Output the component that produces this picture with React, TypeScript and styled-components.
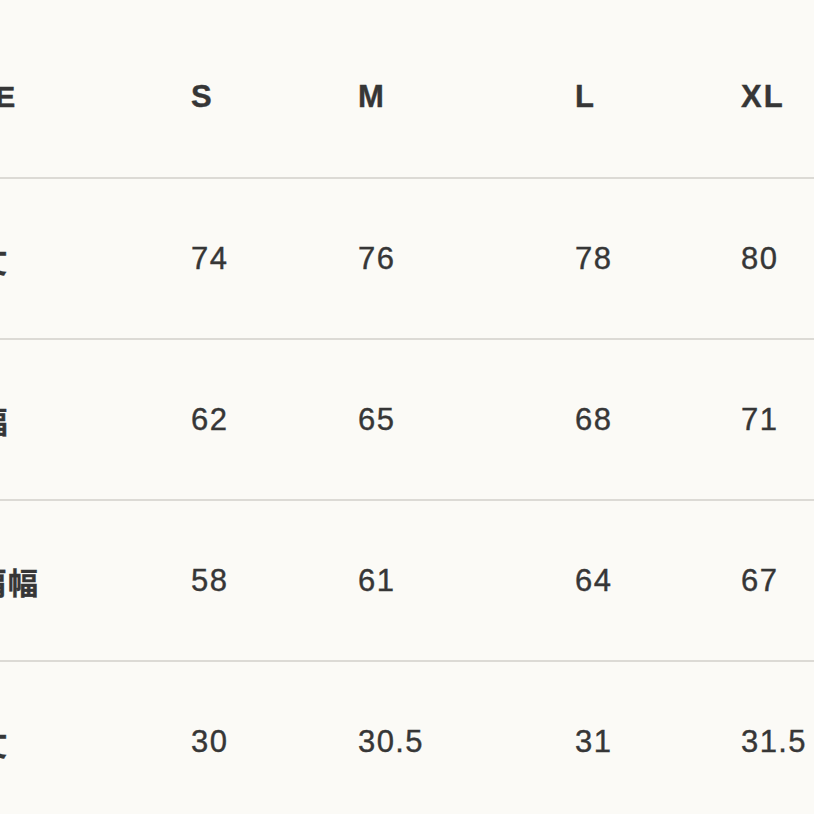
import React from "react";
import styled, { createGlobalStyle } from "styled-components";

const GlobalStyle = createGlobalStyle`
  html, body {
    margin: 0;
    padding: 0;
    background: #fbfaf6;
    overflow: hidden;
  }
  body {
    font-family: "Liberation Sans", Arial, sans-serif;
    color: #363636;
  }
`;

const Page = styled.div`
  width: 814px;
  height: 814px;
  overflow: hidden;
  padding-top: 17px;
  box-sizing: border-box;
`;

// the chart is wider than the window: its label column runs off the left edge
const Table = styled.table`
  margin-left: -53px;
  border-collapse: collapse;
  table-layout: fixed;
  width: 1000px;
`;

const Row = styled.tr`
  height: 161px;
  border-bottom: 2px solid #dcdad5;
`;

const Cell = styled.td<{ $head?: boolean }>`
  padding: 0;
  text-align: left;
  vertical-align: middle;
  white-space: nowrap;
  font-size: 31px;
  font-weight: ${(p) => (p.$head ? 700 : 400)};
  letter-spacing: ${(p) => (p.$head ? "2px" : "1.4px")};
  -webkit-text-stroke: 0.4px #363636;
`;

const Label = styled(Cell)`
  font-size: 30px;
  font-weight: 700;
  letter-spacing: 0.5px;
  font-family: "Liberation Sans", "Noto Sans CJK JP", sans-serif;
`;

const sizes = ["S", "M", "L", "XL"];

const rows: { label: string; values: string[] }[] = [
  { label: "着丈", values: ["74", "76", "78", "80"] },
  { label: "身幅", values: ["62", "65", "68", "71"] },
  { label: "総肩幅", values: ["58", "61", "64", "67"] },
  { label: "袖丈", values: ["30", "30.5", "31", "31.5"] },
];

export default function App() {
  return (
    <Page>
      <GlobalStyle />
      <Table>
        <colgroup>
          <col style={{ width: 244 }} />
          <col style={{ width: 167 }} />
          <col style={{ width: 217 }} />
          <col style={{ width: 166 }} />
          <col />
        </colgroup>
        <tbody>
          <Row>
            <Label>SIZE</Label>
            {sizes.map((s) => (
              <Cell $head key={s}>
                {s}
              </Cell>
            ))}
          </Row>
          {rows.map((r) => (
            <Row key={r.label}>
              <Label>{r.label}</Label>
              {r.values.map((v, i) => (
                <Cell key={i}>{v}</Cell>
              ))}
            </Row>
          ))}
        </tbody>
      </Table>
    </Page>
  );
}
